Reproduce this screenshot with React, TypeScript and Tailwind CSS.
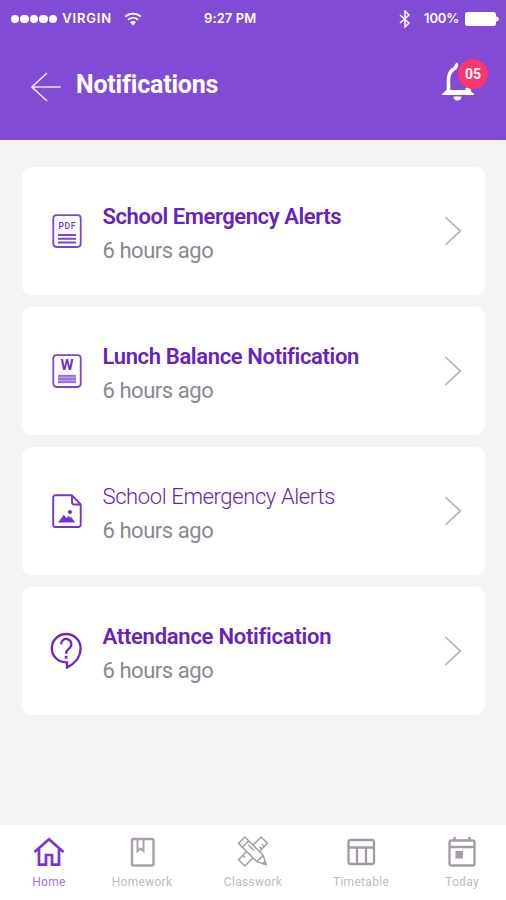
import type { ReactNode } from 'react';

type Notification = {
  title: string;
  time: string;
  titleClass: string;
  icon: ReactNode;
};

function PageIcon({ children }: { children: ReactNode }) {
  return (
    <svg className="h-[34px] w-[30px]" viewBox="0 0 30 34" fill="none" stroke="#7a45d6" strokeWidth="1.8">
      <rect x="1.3" y="1.2" width="27.4" height="31.8" rx="3.2" />
      {children}
    </svg>
  );
}

function PdfIcon() {
  return (
    <PageIcon>
      <text x="15" y="14.6" textAnchor="middle" textLength="17" fontSize="8.5" fontWeight="500" fill="#6a2fd0" stroke="none">
        PDF
      </text>
      <path d="M6 21h18M6 24.8h18M6 28.5h18" strokeWidth="1.9" />
    </PageIcon>
  );
}

function WordIcon() {
  return (
    <PageIcon>
      <text x="15" y="16.4" textAnchor="middle" textLength="13" lengthAdjust="spacingAndGlyphs" fontSize="14" fontWeight="700" fill="#6a2fd0" stroke="none">
        W
      </text>
      <rect x="6" y="20.8" width="18" height="8.4" fill="#b79be9" stroke="none" />
      <path d="M6 21.8h18M6 25h18M6 28.2h18" stroke="#9468df" strokeWidth="1.4" />
    </PageIcon>
  );
}

function ImageIcon() {
  return (
    <svg className="h-[34px] w-[30px]" viewBox="0 0 30 34" fill="none" stroke="#7334d4" strokeWidth="1.9" strokeLinejoin="round">
      <path d="M3.5 1.3H20l8.7 9.2v20.2a2.3 2.3 0 0 1-2.3 2.3H3.5a2.3 2.3 0 0 1-2.3-2.3V3.6a2.3 2.3 0 0 1 2.3-2.3z" />
      <path d="M20 2v6.3c0 1.4.8 2.2 2.2 2.2h6" />
      <path d="M6 28.5l5.8-7.7 2.6 3.2 2-2 1.6 1.6 1-.8 4.3 5.7z" fill="#7334d4" stroke="none" />
      <circle cx="18" cy="18" r="2.1" fill="#7334d4" stroke="none" />
    </svg>
  );
}

function QuestionIcon() {
  return (
    <svg className="mr-[2px] h-[38px] w-[32px] shrink-0" viewBox="0 0 32 38" fill="none" stroke="#6c24d0" strokeWidth="2.3">
      <path d="M17 30.3v5.2C25 31.6 30.6 24.6 30.6 16.3A14.4 14.4 0 0 0 16.2 2 14.4 14.4 0 0 0 1.8 16.2c0 8 6.4 14.1 14.400 14.100z" />
      <path d="M11 12.200a5.200 5.200 0 1 1 8.900 3.600c-2 2-3.800 2.600-3.800 5.900" />
      <path d="M16.100 23.800v2.900" strokeWidth="2.7" />
    </svg>
  );
}

const notifications: Notification[] = [
  {
    title: 'School Emergency Alerts',
    time: '6 hours ago',
    titleClass: 'font-semibold tracking-[-0.42px]',
    icon: <PdfIcon />,
  },
  {
    title: 'Lunch Balance Notification',
    time: '6 hours ago',
    titleClass: 'font-semibold tracking-[-0.35px]',
    icon: <WordIcon />,
  },
  {
    title: 'School Emergency Alerts',
    time: '6 hours ago',
    titleClass: 'font-light tracking-[-0.38px]',
    icon: <ImageIcon />,
  },
  {
    title: 'Attendance Notification',
    time: '6 hours ago',
    titleClass: 'font-semibold tracking-[-0.25px]',
    icon: <QuestionIcon />,
  },
];

function StatusBar() {
  return (
    <div className="flex h-[38px] items-center pl-[11px] pr-[7px] font-['Inter',sans-serif] text-[13px] font-semibold">
      <div className="flex w-[193px] items-center">
        <div className="flex gap-[1.3px]">
          {[0, 1, 2, 3, 4].map((dot) => (
            <span key={dot} className="size-[8.2px] rounded-full bg-white" />
          ))}
        </div>
        <span className="ml-[5px] w-[51px] tracking-[0.85px]">VIRGIN</span>
        <svg className="ml-[11px] h-[14px] w-[18px]" viewBox="0 0 18 14" fill="none" stroke="white" strokeWidth="1.8">
          <path d="M1.2 4.5a12 12 0 0 1 15.6 0M4 7.7a7.8 7.8 0 0 1 10 0" />
          <path d="M6 10.2a4.8 4.8 0 0 1 6 0L9 13.6z" fill="white" stroke="none" />
        </svg>
      </div>
      <span className="whitespace-nowrap tracking-[0.1px]">9:27 PM</span>
      <div className="ml-auto flex items-center">
        <svg className="h-[18px] w-[12px]" viewBox="0 0 12 18" fill="none" stroke="white" strokeWidth="1.5">
          <path d="M1 5l9 8-4 4V1l4 4-9 8" />
        </svg>
        <span className="ml-[13px] w-[36px] tracking-[-0.1px]">100%</span>
        <svg className="ml-[5px] h-[14px] w-[34px]" viewBox="0 0 34 14" fill="white">
          <rect x="0" y="0" width="31" height="14" rx="2.5" />
          <path d="M31 4.5c4 .6 4 4.4 0 5z" />
        </svg>
      </div>
    </div>
  );
}

function Header() {
  return (
    <header className="h-[139.5px] shrink-0 bg-[#824bd6] text-white">
      <StatusBar />
      <div className="flex h-[94px] items-center pl-[31px] pr-[18px]">
        <svg className="mt-[3px] h-[30px] w-[30px]" viewBox="0 0 30 30" fill="none" stroke="#efe2fc" strokeWidth="1.7" strokeLinecap="round">
          <path d="M29 15H1M15.5 1.5L1 15l14.5 13.5" />
        </svg>
        <h1 className="ml-[15px] text-[25px] font-bold tracking-[-0.2px]">Notifications</h1>
        <div className="relative -mt-[8px] ml-auto h-[44px] w-[47px]">
          <svg className="absolute left-0 top-[2px] h-[40px] w-[34px]" viewBox="0 0 34 40" fill="none" stroke="white" strokeWidth="3.6">
            <path d="M7.5 31V18.5c0-6 2.5-9.200 6.500-11.500 1.200-.7 1.200-3.500 3-4" strokeLinejoin="round" />
            <path d="M25.500 26.500l3.500 4" />
            <path d="M1 33l4.500-4h23l4.500 4v1H1z" fill="white" stroke="none" />
            <path d="M5 31.800h24" strokeWidth="3" />
            <path d="M12.500 35.500h8a4 4 0 0 1-8 0z" fill="white" stroke="none" />
          </svg>
          <span className="absolute right-0 top-0 flex size-[30px] items-center justify-center rounded-full bg-[#fd346e] text-[14px] font-bold">
            05
          </span>
        </div>
      </div>
    </header>
  );
}

function NotificationCard({ title, time, titleClass, icon }: Notification) {
  return (
    <li className="flex h-[127.5px] items-center rounded-[9px] bg-white pl-[30px] pr-[23px]">
      <div className="flex w-[30px] items-center justify-center">{icon}</div>
      <div className="ml-[21px] mt-[6px] whitespace-nowrap text-[22px] leading-[34px]">
        <h2 className={`text-[#6522bd] ${titleClass}`}>{title}</h2>
        <p className="tracking-[-0.45px] text-[#838b91]">{time}</p>
      </div>
      <svg className="ml-auto h-[30px] w-[18px]" viewBox="0 0 18 30" fill="none" stroke="#b9b9b9" strokeWidth="1.8">
        <path d="M1.5 1.2L16.3 15 1.5 28.8" />
      </svg>
    </li>
  );
}

function BottomNav() {
  return (
    <nav className="flex h-[75px] shrink-0 bg-white pt-[12px] text-[12px] tracking-[0.3px] text-[#c1b8c2]">
      <a className="flex w-[98px] flex-col items-center text-[#9d76e0]">
        <svg className="h-8 w-8" viewBox="0 0 32 32" fill="none" stroke="#7634d8" strokeWidth="2.7">
          <path d="M1.5 15L16 2.3 30.5 15" />
          <path d="M6 12v15.700h7V18h6v9.700h7V12" />
        </svg>
        <span className="mt-[4px]">Home</span>
      </a>
      <a className="flex w-[88px] flex-col items-center">
        <svg className="h-8 w-8" viewBox="0 0 32 32" fill="none" stroke="#aaa0ac" strokeWidth="2.500">
          <rect x="6" y="2" width="21.500" height="26.500" rx="1.500" />
          <path d="M11.500 3v11l3-2.500 3 2.500V3" strokeWidth="2" />
        </svg>
        <span className="mt-[4px]">Homework</span>
      </a>
      <a className="flex w-[134px] flex-col items-center">
        <svg className="h-8 w-8 overflow-visible" viewBox="0 0 32 32" fill="none" stroke="#aaa0ac" strokeWidth="1.5">
          <g transform="rotate(45 16 14.5)" strokeLinejoin="round">
            <path d="M0 10h26l8.500 4.500L26 19H0zM5.500 10v9M26 10v9M8 13h8" />
            <path d="M11.500 10V-1.500h9V10M11.500 19v11.500h9V19M17 3h3.500M17 6.500h3.500M11.500 24.500h3" />
            <path d="M31.500 13v3l3-1.500z" fill="#aaa0ac" />
          </g>
        </svg>
        <span className="mt-[4px]">Classwork</span>
      </a>
      <a className="flex w-[82px] flex-col items-center">
        <svg className="h-8 w-8" viewBox="0 0 32 32" fill="none" stroke="#a399a7" strokeWidth="2.300">
          <rect x="3.500" y="3" width="25.500" height="24" rx="2" />
          <path d="M3.500 10.500H29M12 10.500V27M21 10.500V27" />
        </svg>
        <span className="mt-[4px]">Timetable</span>
      </a>
      <a className="flex w-[104px] flex-col items-center pl-[16px]">
        <svg className="h-8 w-8" viewBox="0 0 32 32" fill="none" stroke="#a399a7" strokeWidth="2.300">
          <rect x="3.500" y="3.500" width="25" height="25" rx="2" />
          <path d="M3.500 10h25M8.500 0v3M23.500 0v3" />
          <path d="M9.500 14h7.500v7.500H9.500z" fill="#a399a7" stroke="none" />
        </svg>
        <span className="mt-[4px]">Today</span>
      </a>
    </nav>
  );
}

export default function App() {
  return (
    <div className="flex h-[900px] w-[506px] flex-col overflow-hidden bg-[#f5f3f5] font-['Roboto',sans-serif]">
      <Header />
      <main className="flex-1 px-[21.5px] pt-[27.5px]">
        <ul className="flex flex-col gap-[12.5px]">
          {notifications.map((item, index) => (
            <NotificationCard key={index} {...item} />
          ))}
        </ul>
      </main>
      <BottomNav />
    </div>
  );
}
